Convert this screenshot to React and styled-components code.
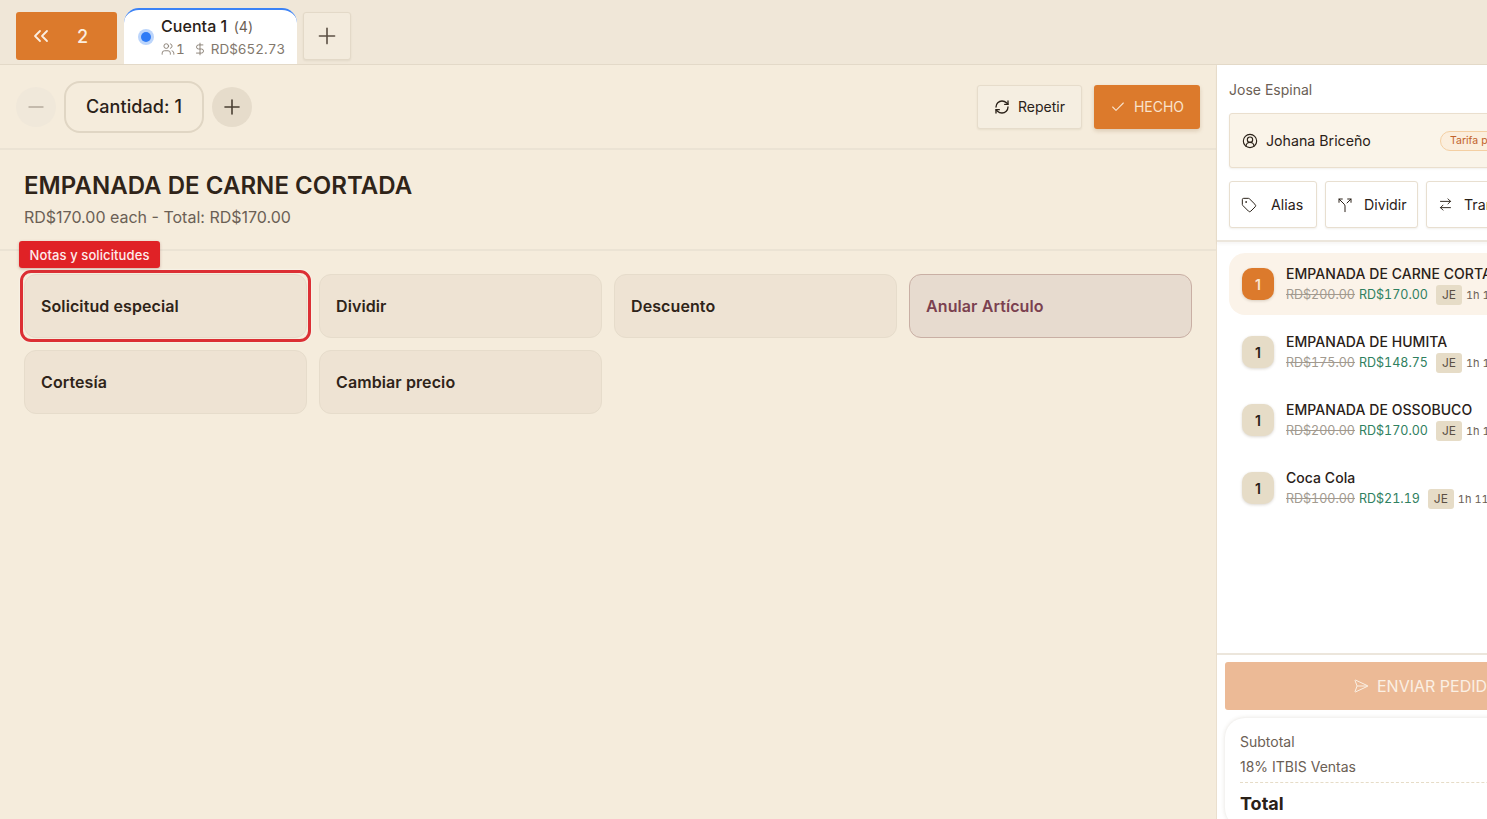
import React from "react";
import styled, { createGlobalStyle } from "styled-components";
import {
  ChevronsLeft,
  Plus,
  Minus,
  Users,
  DollarSign,
  RefreshCw,
  Check,
  CircleUserRound,
  Tag,
  Split,
  ArrowRightLeft,
  SendHorizontal,
} from "lucide-react";

const GlobalStyle = createGlobalStyle`
  html, body {
    margin: 0;
    padding: 0;
    height: 100%;
    overflow: hidden;
    background: #f5ecdc;
  }
  * { box-sizing: border-box; }
  body {
    font-family: Inter, "Liberation Sans", sans-serif;
    color: #2a2118;
  }
`;

const actions = [
  { label: "Solicitud especial", active: true },
  { label: "Dividir" },
  { label: "Descuento" },
  { label: "Anular Artículo", danger: true },
  { label: "Cortesía" },
  { label: "Cambiar precio" },
];

const items = [
  { name: "EMPANADA DE CARNE CORTADA", old: "RD$200.00", price: "RD$170.00", selected: true },
  { name: "EMPANADA DE HUMITA", old: "RD$175.00", price: "RD$148.75" },
  { name: "EMPANADA DE OSSOBUCO", old: "RD$200.00", price: "RD$170.00" },
  { name: "Coca Cola", old: "RD$100.00", price: "RD$21.19" },
];

const App = () => {
  return (
    <Page>
      <GlobalStyle />
      <TopBar>
        <BackButton>
          <ChevronsLeft size={24} strokeWidth={1.8} />
          <span>2</span>
        </BackButton>
        <AccountTab>
          <Radio />
          <div>
            <TabTitle>
              Cuenta 1 <TabCount>(4)</TabCount>
            </TabTitle>
            <TabMeta>
              <Users size={14} strokeWidth={1.5} />
              <GuestCount>1</GuestCount>
              <DollarSign size={14} strokeWidth={1.5} />
              <TabTotal>RD$652.73</TabTotal>
            </TabMeta>
          </div>
        </AccountTab>
        <AddTab>
          <Plus size={26} strokeWidth={1.5} />
        </AddTab>
      </TopBar>

      <Body>
        <Main>
          <Toolbar>
            <QtyButton $muted>
              <Minus size={24} strokeWidth={1.4} />
            </QtyButton>
            <QtyLabel>Cantidad: 1</QtyLabel>
            <QtyButton>
              <Plus size={24} strokeWidth={1.6} />
            </QtyButton>
            <Spacer />
            <RepeatButton>
              <RefreshCw size={16} strokeWidth={2} />
              Repetir
            </RepeatButton>
            <DoneButton>
              <Check size={16} strokeWidth={1.6} />
              HECHO
            </DoneButton>
          </Toolbar>

          <ItemHeader>
            <ItemTitle>EMPANADA DE CARNE CORTADA</ItemTitle>
            <ItemSub>RD$170.00 each - Total: RD$170.00</ItemSub>
          </ItemHeader>

          <ActionGrid>
            {actions.map((a) => (
              <ActionCell key={a.label}>
                {a.active && <NotesBadge>Notas y solicitudes</NotesBadge>}
                <ActionButton $active={a.active} $danger={a.danger}>
                  {a.label}
                </ActionButton>
              </ActionCell>
            ))}
          </ActionGrid>
        </Main>

        <Side>
          <SideTop>
            <Waiter>Jose Espinal</Waiter>
            <CustomerBox>
              <CircleUserRound size={16} strokeWidth={1.7} />
              <CustomerName>Johana Briceño</CustomerName>
              <RatePill>Tarifa predeterminada</RatePill>
            </CustomerBox>
            <SideActions>
              <SideAction $w={88} $gap={14}>
                <Tag size={16} strokeWidth={1.5} />
                Alias
              </SideAction>
              <SideAction $w={93} $gap={11}>
                <Split size={16} strokeWidth={1.5} />
                Dividir
              </SideAction>
              <SideAction $w={120} $gap={11}>
                <ArrowRightLeft size={15} strokeWidth={1.5} />
                Transferir
              </SideAction>
            </SideActions>
          </SideTop>

          <OrderList>
            {items.map((it) => (
              <OrderRow key={it.name} $selected={it.selected}>
                <QtyChip $selected={it.selected}>1</QtyChip>
                <OrderInfo>
                  <OrderName>{it.name}</OrderName>
                  <OrderMeta>
                    <OldPrice>{it.old}</OldPrice>
                    <NewPrice>{it.price}</NewPrice>
                    <Initials>JE</Initials>
                    <Elapsed>1h 11m</Elapsed>
                  </OrderMeta>
                </OrderInfo>
              </OrderRow>
            ))}
          </OrderList>

          <SideBottom>
            <SendButton>
              <SendHorizontal size={16} strokeWidth={1.5} />
              ENVIAR PEDIDO
            </SendButton>
            <Totals>
              <TotalLine>Subtotal</TotalLine>
              <TaxLine>18% ITBIS Ventas</TaxLine>
              <GrandTotal>Total</GrandTotal>
            </Totals>
          </SideBottom>
        </Side>
      </Body>
    </Page>
  );
};

const Page = styled.div`
  width: 1487px;
  height: 819px;
  display: flex;
  flex-direction: column;
  overflow: hidden;
`;

const TopBar = styled.header`
  height: 65px;
  flex: none;
  display: flex;
  align-items: flex-end;
  padding-left: 16px;
  background: #f0e7d8;
  border-bottom: 1px solid #e3d9c8;
`;

const BackButton = styled.button`
  width: 101px;
  height: 48px;
  margin-bottom: 4px;
  border: none;
  border-radius: 3px;
  background: #dc7a2c;
  color: #fbeee0;
  display: flex;
  align-items: center;
  padding: 0 0 0 13px;
  gap: 24px;
  font: 500 18px Inter, sans-serif;
`;

const AccountTab = styled.div`
  width: 173px;
  height: 56px;
  margin-left: 7px;
  padding: 0 0 1px 14px;
  background: #fff;
  border-top: 2px solid #3b82f6;
  border-radius: 15px 15px 0 0;
  display: flex;
  align-items: center;
  gap: 6px;
`;

const Radio = styled.span`
  width: 10px;
  height: 10px;
  margin: 0 4px 0 3px;
  border-radius: 50%;
  background: #2f7bf6;
  box-shadow: 0 0 0 3px #bcd5fb;
`;

const TabTitle = styled.div`
  font-size: 16px;
  font-weight: 500;
  line-height: 20px;
  letter-spacing: 0.05px;
  color: #2a2118;
`;

const TabCount = styled.span`
  font-size: 14px;
  font-weight: 400;
  color: #6b6055;
  margin-left: 2px;
`;

const TabMeta = styled.div`
  display: flex;
  align-items: center;
  margin-top: 3px;
  font-size: 13.5px;
  line-height: 18px;
  font-variant-numeric: tabular-nums;
  color: #82786d;
  svg {
    flex: none;
  }
`;

const GuestCount = styled.span`
  margin: 0 8px 0 1px;
`;

const TabTotal = styled.span`
  margin-left: 4px;
`;

const AddTab = styled.button`
  width: 48px;
  height: 48px;
  margin: 0 0 4px 6px;
  border: 1px solid #e3d9c8;
  border-radius: 3px;
  background: #f3ebdd;
  color: #5c5044;
  display: flex;
  align-items: center;
  justify-content: center;
  padding: 0;
  box-shadow: 0 1px 2px rgba(80, 60, 30, 0.08);
`;

const Body = styled.div`
  flex: 1;
  min-height: 0;
  display: flex;
`;

const Main = styled.main`
  width: 1216px;
  flex: none;
  background: #f5ecdc;
`;

const Toolbar = styled.div`
  height: 85px;
  display: flex;
  align-items: center;
  padding: 0 16px;
  border-bottom: 2px solid #ebe3d4;
`;

const QtyButton = styled.button`
  width: 40px;
  height: 40px;
  border: none;
  border-radius: 50%;
  padding: 0;
  display: flex;
  align-items: center;
  justify-content: center;
  background: ${(p) => (p.$muted ? "#f0e8da" : "#e6dccb")};
  color: ${(p) => (p.$muted ? "#b5ab9d" : "#4a3f33")};
`;

const QtyLabel = styled.div`
  width: 140px;
  height: 52px;
  margin: 0 8px;
  border: 2px solid #e0d6c4;
  border-radius: 16px;
  display: flex;
  align-items: center;
  justify-content: center;
  font-size: 18px;
  font-weight: 500;
  letter-spacing: 0.1px;
  color: #2a2118;
`;

const Spacer = styled.div`
  flex: 1;
`;

const RepeatButton = styled.button`
  width: 105px;
  height: 44px;
  margin-right: 12px;
  border: 1px solid #e6dccb;
  border-radius: 3px;
  background: #f5eee1;
  color: #2a2118;
  display: flex;
  align-items: center;
  justify-content: center;
  gap: 8px;
  font: 400 14px Inter, sans-serif;
  box-shadow: 0 1px 2px rgba(80, 60, 30, 0.08);
`;

const DoneButton = styled.button`
  width: 106px;
  height: 44px;
  border: none;
  border-radius: 3px;
  background: #dc7a2c;
  color: #f9e3cd;
  display: flex;
  align-items: center;
  justify-content: center;
  gap: 8px;
  font: 400 14px Inter, sans-serif;
  box-shadow: 0 2px 4px rgba(120, 70, 20, 0.2);
`;

const ItemHeader = styled.div`
  height: 101px;
  padding: 21px 24px 0;
  border-bottom: 2px solid #ebe3d4;
`;

const ItemTitle = styled.h1`
  margin: 0;
  font-size: 24px;
  font-weight: 600;
  line-height: 30px;
  letter-spacing: 0.05px;
  color: #2f2419;
`;

const ItemSub = styled.div`
  margin-top: 5px;
  font-size: 16px;
  line-height: 22px;
  color: #6b6055;
`;

const ActionGrid = styled.div`
  display: grid;
  grid-template-columns: repeat(4, 283px);
  grid-auto-rows: 64px;
  gap: 12px;
  padding: 23px 24px 0;
`;

const ActionCell = styled.div`
  position: relative;
`;

const NotesBadge = styled.div`
  position: absolute;
  left: -5px;
  top: -33px;
  z-index: 2;
  width: 141px;
  height: 27px;
  border-radius: 3px;
  background: #e02226;
  color: #fdecec;
  display: flex;
  align-items: center;
  justify-content: center;
  font-size: 13px;
  font-weight: 500;
  letter-spacing: 0.1px;
  box-shadow: 0 1px 3px rgba(120, 30, 30, 0.3);
`;

const ActionButton = styled.button`
  position: relative;
  width: 100%;
  height: 100%;
  padding: 0 16px;
  text-align: left;
  border-radius: 12px;
  font: 600 16px Inter, sans-serif;
  letter-spacing: 0.1px;
  border: 1px solid ${(p) => (p.$danger ? "#c9afa4" : "#e6dccb")};
  background: ${(p) => (p.$danger ? "#e7dbcf" : "#eee3d3")};
  color: ${(p) => (p.$danger ? "#7b4150" : "#2f2419")};

  &::after {
    content: "";
    display: ${(p) => (p.$active ? "block" : "none")};
    position: absolute;
    inset: -5px;
    border: 3px solid #dc2f34;
    border-radius: 11px;
    box-shadow: 0 0 2px #fff;
  }
`;

const Side = styled.aside`
  width: 400px;
  flex: none;
  display: flex;
  flex-direction: column;
  min-height: 0;
  background: #fff;
  border-left: 1px solid #eadfce;
`;

const SideTop = styled.div`
  height: 177px;
  flex: none;
  padding: 14px 12px 0;
  border-bottom: 2px solid #ece6dc;
  box-shadow: 0 2px 3px rgba(80, 60, 30, 0.05);
`;

const Waiter = styled.div`
  font-size: 14px;
  line-height: 22px;
  color: #6b6055;
`;

const CustomerBox = styled.div`
  height: 55px;
  margin-top: 12px;
  padding: 0 12px;
  display: flex;
  align-items: center;
  gap: 8px;
  background: #faf4e9;
  border: 1px solid #eadfce;
  border-radius: 3px;
  box-shadow: 0 1px 2px rgba(80, 60, 30, 0.08);
`;

const CustomerName = styled.span`
  width: 166px;
  flex: none;
  font-size: 14.2px;
  color: #2a2118;
`;

const RatePill = styled.span`
  flex: none;
  height: 20px;
  padding: 0 9px;
  display: flex;
  align-items: center;
  border-radius: 10px;
  background: #fbeedd;
  border: 1px solid #f4cfa3;
  color: #c2622a;
  font-size: 10.5px;
  white-space: nowrap;
`;

const SideActions = styled.div`
  display: flex;
  gap: 8px;
  margin-top: 13px;
`;

const SideAction = styled.button`
  width: ${(p) => p.$w}px;
  height: 47px;
  flex: none;
  border: 1px solid #e8dfd0;
  border-radius: 3px;
  background: #fff;
  color: #2a2118;
  display: flex;
  align-items: center;
  padding: 0 0 0 11px;
  gap: ${(p) => p.$gap}px;
  font: 400 14.2px Inter, sans-serif;
  box-shadow: 0 1px 2px rgba(80, 60, 30, 0.08);
  svg {
    flex: none;
  }
`;

const OrderList = styled.div`
  flex: 1;
  min-height: 0;
  padding: 11px 0 0 12px;
  display: flex;
  flex-direction: column;
`;

const OrderRow = styled.div`
  height: 62px;
  margin-bottom: 6px;
  padding: 0 0 0 13px;
  display: flex;
  align-items: center;
  gap: 12px;
  border-radius: 16px 0 0 16px;
  background: ${(p) => (p.$selected ? "#fbf3e9" : "#fff")};
`;

const QtyChip = styled.div`
  width: 32px;
  height: 32px;
  flex: none;
  border-radius: 10px;
  display: flex;
  align-items: center;
  justify-content: center;
  font-size: 14px;
  font-weight: 600;
  background: ${(p) => (p.$selected ? "#dc7a2c" : "#e6dcc7")};
  color: ${(p) => (p.$selected ? "#fbe6cf" : "#2a2118")};
  box-shadow: 0 1px 3px rgba(80, 60, 30, 0.2);
`;

const OrderInfo = styled.div`
  min-width: 0;
  padding-top: 1px;
`;

const OrderName = styled.div`
  font-size: 14px;
  font-weight: 500;
  line-height: 20px;
  letter-spacing: 0.05px;
  white-space: nowrap;
  color: #2a2118;
`;

const OrderMeta = styled.div`
  display: flex;
  align-items: center;
  height: 22px;
  font-size: 12.5px;
  font-variant-numeric: tabular-nums;
  white-space: nowrap;
`;

const OldPrice = styled.span`
  color: #a29a8f;
  text-decoration: line-through;
`;

const NewPrice = styled.span`
  margin-left: 4px;
  color: #2f8060;
`;

const Initials = styled.span`
  width: 26px;
  height: 20px;
  margin-left: 8px;
  border-radius: 3px;
  background: #e6dcc7;
  color: #5c5044;
  display: flex;
  align-items: center;
  justify-content: center;
  font-size: 12px;
`;

const Elapsed = styled.span`
  margin-left: 4px;
  font-size: 11px;
  color: #6b6055;
`;

const SideBottom = styled.div`
  height: 166px;
  flex: none;
  padding: 7px 0 0 8px;
  border-top: 2px solid #ece6dc;
`;

const SendButton = styled.button`
  width: 380px;
  height: 48px;
  border: none;
  border-radius: 3px;
  background: #ecba96;
  color: #fbf0e4;
  display: flex;
  align-items: center;
  justify-content: flex-start;
  padding-left: 128px;
  gap: 8px;
  font: 400 16px Inter, sans-serif;
`;

const Totals = styled.div`
  width: 380px;
  height: 110px;
  margin-top: 8px;
  padding: 10px 15px 0;
  border-radius: 20px;
  background: #fff;
  box-shadow: 0 0 4px rgba(80, 60, 30, 0.16);
`;

const TotalLine = styled.div`
  height: 26px;
  display: flex;
  align-items: center;
  font-size: 14px;
  color: #6b6055;
`;

const TaxLine = styled(TotalLine)`
  height: 29px;
  padding-bottom: 3px;
  border-bottom: 1px dashed #e6dcc7;
`;

const GrandTotal = styled.div`
  margin-top: 9px;
  font-size: 18px;
  font-weight: 700;
  line-height: 24px;
  color: #2a2118;
`;

export default App;
